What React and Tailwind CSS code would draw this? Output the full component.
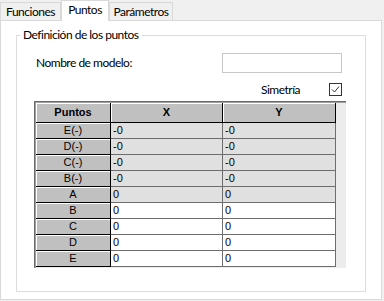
import React from 'react';

const ROWS = [
  { name: 'E(-)', v: '-0', locked: true },
  { name: 'D(-)', v: '-0', locked: true },
  { name: 'C(-)', v: '-0', locked: true },
  { name: 'B(-)', v: '-0', locked: true },
  { name: 'A', v: '0', locked: true },
  { name: 'B', v: '0', locked: false },
  { name: 'C', v: '0', locked: false },
  { name: 'D', v: '0', locked: false },
  { name: 'E', v: '0', locked: false },
];

const ui = { fontFamily: 'Lato, "Noto Sans", sans-serif' };
const grid = { fontFamily: '"Liberation Sans", Arial, sans-serif' };

function Tab({ label, active, w }) {
  if (active) {
    return (
      <div className={`relative z-10 -mb-px ${w} h-[21px] pb-[2px] bg-white border border-b-0 border-[#d9d9d9] flex items-center justify-center text-[12px] tracking-[-0.5px] leading-none text-black`}>
        {label}
      </div>
    );
  }
  return (
    <div className={`mt-[2px] ${w} h-[18px] bg-[#f0f0f0] border border-b-0 border-[#d9d9d9] flex items-center justify-center text-[12px] tracking-[-0.5px] leading-none text-black`}>
      {label}
    </div>
  );
}

// celda tipo botón (cabecera de fila / columna)
function HeadCell({ children, bold, w, h }) {
  return (
    <div
      className={`${w} ${h} bg-[#c0c0c0] border-r border-b border-black shadow-[inset_1px_1px_0_#ffffff] flex items-center justify-center text-[11px] leading-none text-black ${bold ? 'font-bold' : ''}`}
    >
      {children}
    </div>
  );
}

function DataCell({ children, w, locked }) {
  return (
    <div
      className={`${w} h-[16px] border-r border-b border-[#6e6e6e] flex items-center pl-[2px] text-[11px] leading-none text-black ${locked ? 'bg-[#e0e0e0]' : 'bg-white'}`}
    >
      {children}
    </div>
  );
}

export default function App() {
  return (
    <div className="w-[384px] h-[301px] bg-[#f0f0f0] overflow-hidden" style={ui}>
      {/* Pestañas */}
      <div className="flex h-[20px] items-start">
        <Tab label="Funciones" w="w-[61px]" />
        <Tab label="Puntos" w="w-[48px]" active />
        <Tab label="Parámetros" w="w-[64px]" />
      </div>

      {/* Panel */}
      <div className="w-[382px] h-[280px] bg-white border border-[#d9d9d9]">
        <fieldset className="ml-[15px] mt-[6px] w-[350px] h-[265px] border border-[#dcdcdc] p-0">
          <legend className="ml-[3px] px-[3px] text-[12px] tracking-[-0.5px] leading-[16px] text-black">
            Definición de los puntos
          </legend>

          <div className="mt-[10px] flex items-center h-[20px]">
            <span className="ml-[19px] text-[12px] tracking-[-0.5px] text-black">Nombre de modelo:</span>
            <div className="ml-auto mr-[23px] w-[120px] h-[20px] border border-[#c8c8c8] bg-white" />
          </div>

          <div className="mt-[10px] flex items-center h-[13px]">
            <span className="ml-auto mr-[29px] text-[12px] tracking-[-0.5px] text-black">Simetría</span>
            <svg width="13" height="13" viewBox="0 0 13 13" className="mr-[23px]">
              <rect x="0.5" y="0.5" width="12" height="12" fill="#fff" stroke="#333" />
              <path d="M3 6.5 L5.5 9 L10 3.5" fill="none" stroke="#333" strokeWidth="1" />
            </svg>
          </div>

          {/* Tabla */}
          <div
            className="mt-[5px] ml-[17px] w-[312px] h-[167px] bg-[#ececec] border-t border-l border-[#6b6b6b] shadow-[inset_1px_1px_0_#a0a0a0] pt-px pl-px"
            style={grid}
          >
            <div className="flex">
              <HeadCell bold w="w-[75px]" h="h-[20px]">Puntos</HeadCell>
              <HeadCell bold w="w-[112px]" h="h-[20px]">X</HeadCell>
              <HeadCell bold w="w-[113px]" h="h-[20px]">Y</HeadCell>
            </div>
            {ROWS.map((r, i) => (
              <div key={i} className="flex">
                <HeadCell w="w-[75px]" h="h-[16px]">{r.name}</HeadCell>
                <DataCell w="w-[112px]" locked={r.locked}>{r.v}</DataCell>
                <DataCell w="w-[113px]" locked={r.locked}>{r.v}</DataCell>
              </div>
            ))}
          </div>
        </fieldset>
      </div>
    </div>
  );
}
